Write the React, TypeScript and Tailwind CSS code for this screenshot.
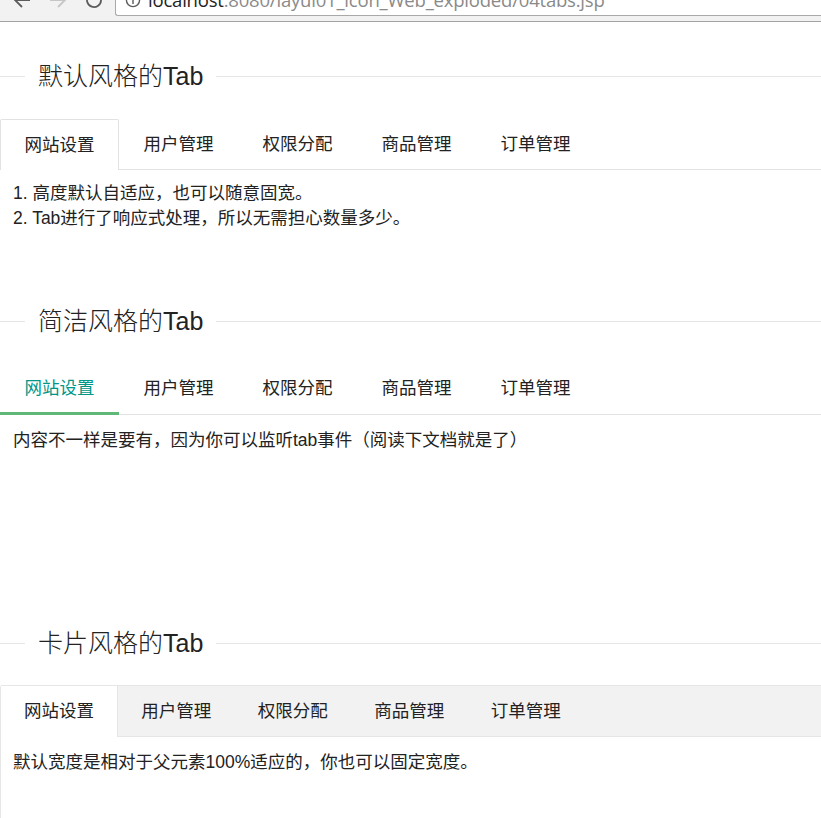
import React from 'react'

const tabs = ['网站设置', '用户管理', '权限分配', '商品管理', '订单管理']

function FieldTitle({ children }: { children: React.ReactNode }) {
  return (
    <div className="flex items-center h-[30px]">
      <div className="w-[25px] h-px bg-[#e6e6e6]" />
      <div className="px-[13px] text-[25px] leading-[30px] font-light text-[#222]">{children}</div>
      <div className="flex-1 h-px bg-[#e6e6e6]" />
    </div>
  )
}

function BrowserBar() {
  return (
    <div className="h-[22px] bg-[#f2f2f2] border-b border-[#a3a3a3] flex items-start overflow-hidden">
      <div className="w-[115px] flex items-start shrink-0">
        <svg className="ml-[12px] -mt-[10px]" width="20" height="20" viewBox="0 0 20 20" fill="none" stroke="#5c5c5c" strokeWidth="1.8">
          <path d="M3 10h15M10 3l-7 7 7 7" />
        </svg>
        <svg className="ml-[16px] -mt-[10px]" width="20" height="20" viewBox="0 0 20 20" fill="none" stroke="#c6c6c6" strokeWidth="1.8">
          <path d="M17 10H2M10 3l7 7-7 7" />
        </svg>
        <svg className="ml-[16px] -mt-[10px]" width="20" height="20" viewBox="0 0 20 20" fill="none" stroke="#5c5c5c" strokeWidth="1.8">
          <path d="M16 6.5A7 7 0 1 0 17 10" />
        </svg>
      </div>
      <div className="flex-1 h-[16px] bg-white border-l border-b border-[#a9a9a9] rounded-bl-[3px] flex items-start">
        <svg className="ml-[9px] -mt-[8px] shrink-0" width="16" height="16" viewBox="0 0 16 16" fill="none" stroke="#5c5c5c" strokeWidth="1.4">
          <circle cx="8" cy="8" r="6.6" />
          <path d="M8 7v5M8 4.6v1.2" />
        </svg>
        <div className="ml-[7px] -mt-[10px] text-[18.5px] leading-[20px] whitespace-nowrap font-['Open_Sans','Noto_Sans',sans-serif] tracking-[-0.2px]">
          <span className="text-[#222]">localhost</span>
          <span className="text-[#8a8a8a]">:8080/layui01_icon_Web_exploded/04tabs.jsp</span>
        </div>
      </div>
    </div>
  )
}

export default function App() {
  return (
    <div className="w-full overflow-hidden bg-white text-[#333] font-['Liberation_Sans','Noto_Sans_CJK_SC',sans-serif]">
      <BrowserBar />

      {/* 默认风格 */}
      <div className="mt-[39px]">
        <FieldTitle>默认风格的Tab</FieldTitle>
      </div>
      <div className="mt-[28px] flex items-start h-[51px] border-b border-[#e2e2e2]">
        {tabs.map((t, i) => (
          <div
            key={t}
            className={
              i === 0
                ? 'w-[119px] h-[51px] shrink-0 bg-white border border-b-0 border-[#e2e2e2] rounded-t-[2px] text-center text-[17.5px] leading-[50px] text-[#222]'
                : 'w-[119px] h-[50px] shrink-0 text-center text-[17.5px] leading-[50px] text-[#222]'
            }
          >
            {t}
          </div>
        ))}
      </div>
      <div className="pt-[11px] px-[13px] text-[17.5px] leading-[25px] text-[#222]">
        <div>1. 高度默认自适应，也可以随意固宽。</div>
        <div>2. Tab进行了响应式处理，所以无需担心数量多少。</div>
      </div>

      {/* 简洁风格 */}
      <div className="mt-[75px]">
        <FieldTitle>简洁风格的Tab</FieldTitle>
      </div>
      <div className="mt-[28px] flex items-start h-[51px] border-b border-[#e2e2e2]">
        {tabs.map((t, i) => (
          <div
            key={t}
            className={
              i === 0
                ? 'w-[119px] h-[51px] shrink-0 border-b-[3px] border-[#5FB878] text-center text-[17.5px] leading-[48px] text-[#009688]'
                : 'w-[119px] h-[50px] shrink-0 text-center text-[17.5px] leading-[48px] text-[#222]'
            }
          >
            {t}
          </div>
        ))}
      </div>
      <div className="pt-[13px] px-[13px] text-[17.5px] leading-[25px] text-[#222]">
        内容不一样是要有，因为你可以监听tab事件（阅读下文档就是了）
      </div>

      {/* 卡片风格 */}
      <div className="mt-[175px]">
        <FieldTitle>卡片风格的Tab</FieldTitle>
      </div>
      <div className="mt-[27px] -mr-[6px] border border-[#e6e6e6] rounded-[2px]">
        <div className="flex items-start h-[51px] bg-[#f2f2f2] border-b border-[#e6e6e6]">
          {tabs.map((t, i) => (
            <div
              key={t}
              className={
                i === 0
                  ? 'w-[117px] h-[51px] shrink-0 bg-white border-r border-[#e6e6e6] text-center text-[17.5px] leading-[50px] text-[#222]'
                  : 'w-[116.5px] h-[50px] shrink-0 text-center text-[17.5px] leading-[50px] text-[#222]'
              }
            >
              {t}
            </div>
          ))}
        </div>
        <div className="pt-[13px] pb-[60px] px-[12px] text-[17.5px] leading-[25px] text-[#222]">
          默认宽度是相对于父元素100%适应的，你也可以固定宽度。
        </div>
      </div>
    </div>
  )
}
